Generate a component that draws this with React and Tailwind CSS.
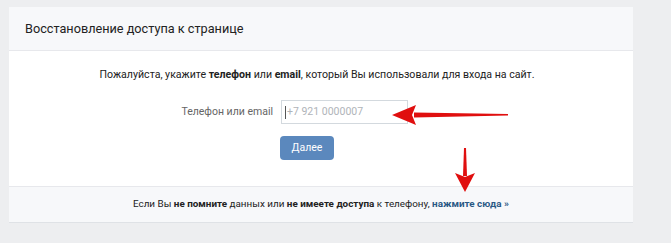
export default function App() {
  return (
    <div className="w-[671px] h-[243px] bg-[#edeef0] pt-[7px] pl-[9px] overflow-hidden font-['Roboto','Liberation_Sans',sans-serif]">
      <div className="relative w-[624px] bg-white shadow-[0_1px_0_0_#dfe2e6] flex flex-col">
        <div className="h-[44px] bg-[#f7f8fa] border-b border-[#e7e8ec] flex items-center pl-[16px] text-[12.7px] text-[#222]">
          Восстановление доступа к странице
        </div>
        <div className="flex flex-col pt-[16px] pb-[26px]">
          <div className="flex justify-center pr-[8px]">
            <p className="text-[10.6px] text-[#222] leading-[16px]">
              Пожалуйста, укажите <b>телефон</b> или <b>email</b>, который Вы использовали для входа на сайт.
            </p>
          </div>
          <div className="flex items-center mt-[17px]">
            <span className="w-[264px] text-right text-[10.5px] text-[#656565]">Телефон или email</span>
            <div className="ml-[8px] w-[127px] h-[24px] border border-[#d3d9de] flex items-center pl-[3px] text-[10.5px] text-[#b0b4b9]">
              <span className="w-px h-[13px] bg-[#555] mr-[1px]"></span>+7 921 0000007
            </div>
          </div>
          <button className="mt-[12px] ml-[271px] w-[54px] h-[24px] rounded-[4px] bg-[#5b88bd] text-white text-[10.5px]">Далее</button>
        </div>
        <div className="h-[36px] bg-[#f7f8fa] border-t border-[#e7e8ec] flex items-center justify-center text-[#222] text-[9.9px]">
          <span>Если Вы <b>не помните</b> данных или <b>не имеете доступа</b> к телефону, <span className="text-[#2a5885] font-bold">нажмите сюда »</span></span>
        </div>
        <svg className="absolute left-[383px] top-[96px]" width="118" height="24" viewBox="0 0 118 24">
          <path d="M116 11 L22 9.5 L22 14.5 L116 12.5 Z" fill="#e00f0f" />
          <path d="M0 12 L24 2 L20 12 L24 22 Z" fill="#e00f0f" />
        </svg>
        <svg className="absolute left-[445px] top-[141px]" width="22" height="45" viewBox="0 0 22 45">
          <path d="M10 0 L12 0 L13 28 L9 28 Z" fill="#e00f0f" />
          <path d="M1 25 L11 44 L21 25 L11 29 Z" fill="#e00f0f" />
        </svg>
      </div>
    </div>
  );
}
